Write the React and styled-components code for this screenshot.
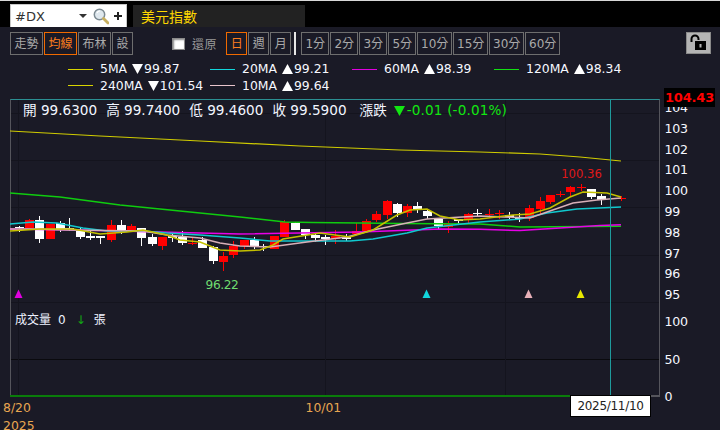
import React from 'react';
import styled, { createGlobalStyle } from 'styled-components';

const FONT = '"DejaVu Sans", "Noto Sans CJK TC", sans-serif';
const CJK = '"Noto Sans CJK TC", "DejaVu Sans", sans-serif';

const Global = createGlobalStyle`
  html, body { margin: 0; padding: 0; background: #1a1a26; }
  body { width: 720px; height: 430px; overflow: hidden; font-family: ${FONT}; }
`;

const Page = styled.div`
  width: 720px; height: 430px; display: flex; flex-direction: column;
  background: #1a1a26; overflow: hidden;
`;
const Header = styled.header`
  height: 27px; flex: none; background: #000; border-top: 1px solid #d8d8d8;
  box-sizing: border-box; display: flex; align-items: flex-end; padding-left: 10px; gap: 6px;
`;
const SearchBox = styled.div`
  width: 117px; height: 23px; box-sizing: border-box; background: #fff;
  border: 1px solid #c8c8c8; border-bottom: none; display: flex; align-items: center;
  padding: 0 3px 0 4px; font: 13px "DejaVu Sans", sans-serif; color: #333;
`;
const SearchText = styled.span`flex: 1;`;
const Caret = styled.span`
  width: 0; height: 0; border-left: 4px solid transparent; border-right: 4px solid transparent;
  border-top: 4px solid #333; margin-right: 6px;
`;
const Title = styled.div`
  width: 172px; height: 22px; background: #222; color: #ffd800; font: 14px/22px ${CJK};
  padding-left: 8px; box-sizing: border-box; letter-spacing: 0;
`;
const Toolbar = styled.nav`
  height: 23px; flex: none; margin-top: 5px; padding-left: 10px; display: flex; align-items: stretch;
`;
const Group = styled.div`
  display: flex; gap: ${p => p.$gap ?? 1}px; margin-left: ${p => p.$ml ?? 0}px;
`;
const Btn = styled.button`
  width: ${p => p.$w}px; height: 23px; padding: 0; box-sizing: border-box; background: transparent;
  border: 1px solid ${p => (p.$on ? '#f06a00' : '#6e6e6e')};
  color: ${p => (p.$on ? '#ff7f1e' : '#aaaaaa')}; font: 12px/20px ${FONT};
`;
const Restore = styled.label`
  display: flex; align-items: center; margin-left: 39px; color: #999; font: 12px ${CJK}; letter-spacing: 0.6px;
`;
const Check = styled.span`
  width: 13px; height: 12px; background: #fff; border: 1px solid #8a8a8a; box-sizing: border-box;
  margin-right: 7px; box-shadow: inset 1px 1px 2px #888;
`;
const Sep = styled.span`width: 2px; height: 23px; background: #e6e6e6; margin: 0 5px 0 3px;`;
const Lock = styled.button`
  width: 25px; height: 22px; padding: 0; margin-left: auto; margin-right: 9px; background: #b4b4b4;
  border: 1px solid #8a8a8a; display: flex; align-items: center; justify-content: center;
`;
const Legend = styled.div`
  margin: 6px 0 0 68px; display: grid; grid-template-columns: repeat(4, 142px); grid-auto-rows: 16.5px;
  color: #f6f8ff; font: 12.4px/16.5px ${FONT};
`;
const LegendItem = styled.div`display: flex; align-items: center;`;
const Swatch = styled.i`
  width: 25px; height: 1px; background: ${p => p.$c}; margin-right: 7px; flex: none;
`;
const Tri = styled.svg`display: block; flex: none; margin: ${p => p.$m};`;
const ChartRow = styled.section`
  position: relative; margin-top: 5px; flex: 1; display: flex; padding-left: 10px; min-height: 0;
`;
const Plot = styled.div`
  position: relative; width: 650px; height: 298px; box-sizing: border-box; flex: none;
  border-top: 1px solid #2b8f92; border-left: 1px solid #55555c; border-right: 1px solid #55555c;
`;
const PlotSvg = styled.svg`position: absolute; left: -1px; top: -1px; display: block;`;
const Quote = styled.div`
  position: absolute; left: 12px; top: 1px; display: flex; gap: 9px; color: #f2f6ff; font: 13.6px/19px ${FONT}; white-space: nowrap;
`;
const ChangeRow = styled.span`display: flex; align-items: center; margin-left: 4px;`;
const Change = styled.span`color: #12e612; letter-spacing: 0.15px;`;
const Volume = styled.div`
  position: absolute; left: 4px; top: 211px; color: #eef2ff; font: 12px/18px ${FONT}; display: flex; gap: 7px; white-space: nowrap;
`;
const VolArrow = styled.span`color: #13a613; margin: 0 1px 0 3px;`;
const Axis = styled.div`
  flex: none; width: 60px; height: 298px; position: relative;
  color: #f6f8ff; font: 12.6px/14px ${FONT}; letter-spacing: -0.35px; padding-left: 4.6px; box-sizing: border-box;
`;
const Prices = styled.div`display: flex; flex-direction: column; margin-top: 2px;`;
const Tick = styled.span`height: ${p => p.$h}px; line-height: 14px; display: block;`;
const Volumes = styled.div`display: flex; flex-direction: column; margin-top: 13px;`;
const PriceTag = styled.div`
  position: absolute; left: 664px; top: -11px; width: 51px; height: 19px; background: #000; color: #f00;
  font: bold 13px/19px "DejaVu Sans", sans-serif; letter-spacing: -0.2px; text-align: center; white-space: nowrap; overflow: hidden;
`;
const Dates = styled.div`
  position: absolute; left: 3px; top: 299.5px; color: #e8a651; font: 12.4px/18px ${FONT};
  display: flex; gap: 271px;
`;
const DateCol = styled.div`display: flex; flex-direction: column;`;
const CursorDate = styled.div`
  position: absolute; left: 570px; top: 296px; width: 81px; height: 22px; box-sizing: border-box;
  background: #fff; border: 1px solid #000; color: #222; font: 12px/20px ${FONT}; letter-spacing: -0.3px; text-align: center;
`;

const C = (x, red, t, b, wt, wb) => ({ x: Math.floor(x), red, t, b, wt, wb });
const candles = [
  C(19,0,227,228,226,232),C(29,1,220,228,219,228),C(39,0,220,239,216,243),C(50,1,224,239,224,239),
  C(60,0,223,229,221,232),C(69.5,0,228,229,218,231),C(80,0,231,237,228,239),C(90,0,236,238,231,240),
  C(100,0,236,238,236,244),C(111,1,225,240,220,242),C(121,0,225,231,220,234),C(131,1,226,230,224,230),
  C(141,0,228,238,228,246),C(152,0,237,244,234,246),C(162,1,237,246,237,250),C(172,0,236,238,234,242),
  C(182,0,237,243,231,245),C(192,1,243,244,237,245),C(202.5,0,240,248,237,248),C(213,0,247,261,246,264),
  C(223,1,256,262,252,271),C(233,1,246,255,241,258),C(244,1,240,246,240,249),C(254,0,240,247,237,249),
  C(263.5,0,246,247,244,251),C(274,1,236,249,236,249),C(284,1,222,237,220,237),C(295,0,223,230,222,230),
  C(305,0,229,235,229,239),C(315,0,235,238,232,242),C(325,0,237,239,235,245),C(335,1,236,239,230,244),
  C(346,0,237,239,234,241),C(356,1,231,234,223,234),C(366,1,221,231,219,231),C(376,1,214,220,211,222),
  C(387,1,201,215,200,219),C(397,0,204,213,203,217),C(407,1,206,213,204,217),C(417,0,206,210,202,213),
  C(427,0,211,216,209,219),C(438,0,219,226,218,229),C(448,1,224,227,221,233),C(458,0,219,221,219,224),
  C(468,1,214,220,213,224),C(477.5,0,213,214,209,217),C(489,1,214,215,209,218),C(499,1,213,214,210,219),
  C(509,0,215,217,212,219),C(519,0,217,219,213,222),C(529,1,208,218,205,221),C(540,1,201,209,197,214),
  C(550,1,195,202,195,204),C(560,1,194,195,191,197),C(570,1,187,192,186,197),C(581,1,187,188,184,191),
  C(591,0,189,197,189,199),C(601,0,196,200,194,205),C(621,1,198,199,196,201),
];

const lines = [
  { c: '#d0cc00', w: 1.2, p: '10,131 100,136 200,141 300,146 400,150 480,152 540,154 580,157 621,161' },
  { c: '#0fcc0f', w: 1.5, p: '10,193 60,197 120,205 180,211 240,217 285,222 312,222.5 360,223 400,223.5 480,224 520,227 621,226.3' },
  { c: '#e800e8', w: 1.5, p: '10,229 77,230 160,232 240,234 360,232 440,229 480,229.3 520,230.5 560,228 600,225.5 621,224.7' },
  { c: '#10c8ce', w: 1.5, p: '10,224 33,222 57,223 83,228 107,231 143,231 167,233 200,235 240,238 270,241 350,241 373,239 407,233 427,228 480,222 520,219 547,213 577,209 621,207' },
  { c: '#d8b0b8', w: 1.5, p: '10,229 30,229 67,230 143,231 167,235 200,238 220,243 240,246 270,247 307,242 347,237 373,230 407,223 427,219 480,216 530,218 547,212 573,203 597,200 621,198' },
  { c: '#c4c000', w: 1.5, p: '10,231 40,229 73,229 100,234 127,232 143,230 167,235 180,240 200,242 220,250 240,251 260,250 273,245 283,239 320,233 350,237 373,230 397,215 410,210 427,209 440,216 460,220 480,219 513,215 530,214 550,208 570,197 583,192 607,193 621,197' },
];

const Mark = ({ x, c }) => <polygon points={`${x},289.5 ${x + 4},298 ${x - 4},298`} fill={c} />;

const PriceChart = () => (
  <PlotSvg width="652" height="300" viewBox="10 99 652 300">
    {[113, 160, 207, 255, 302, 359].map(y => (
      <line key={y} x1="11" x2="659" y1={y + 0.5} y2={y + 0.5} stroke={y === 359 ? '#0a0a0e' : '#14141e'} />
    ))}
    {[18, 325, 505].map(x => (
      <line key={x} x1={x + 0.5} x2={x + 0.5} y1="100" y2="396" stroke="#14141e" />
    ))}
    {candles.map(k => {
      const col = k.red ? '#f00' : '#fff';
      return (
        <g key={k.x} fill={col} shapeRendering="crispEdges">
          <rect x={k.x} y={k.wt} width="1" height={k.wb - k.wt} />
          <rect x={k.x - 4} y={k.t} width="9" height={Math.max(1, k.b - k.t)} />
        </g>
      );
    })}
    {lines.map(l => (
      <polyline key={l.c} points={l.p} fill="none" stroke={l.c} strokeWidth={l.w} />
    ))}
    <line x1="10" x2="570" y1="396" y2="396" stroke="#0a7d0a" strokeWidth="2" />
    <line x1="570" x2="659" y1="396" y2="396" stroke="#55555c" strokeWidth="2" />
    <line x1="610.5" x2="610.5" y1="100" y2="396" stroke="#1f9a9c" />
    <Mark x={18.5} c="#e000e0" />
    <Mark x={426.5} c="#12d6dc" />
    <Mark x={528.5} c="#e8b0b8" />
    <Mark x={580.5} c="#e8e800" />
    <text x="222" y="289" fill="#6fdc6f" fontSize="12.2" letterSpacing="-0.4" fontFamily="DejaVu Sans" textAnchor="middle">96.22</text>
    <text x="581.5" y="178" fill="#e01818" fontSize="11.6" fontFamily="DejaVu Sans" textAnchor="middle">100.36</text>
  </PlotSvg>
);

const Magnifier = () => (
  <svg width="16" height="17" viewBox="0 0 16 17">
    <circle cx="6.5" cy="6.5" r="5.2" fill="#dfe8ee" stroke="#7c8a92" strokeWidth="1.5" />
    <path d="M4 5 A3 3 0 0 1 7 3" stroke="#fff" strokeWidth="1.2" fill="none" />
    <path d="M10.5 10.5 L15 15" stroke="#c8b060" strokeWidth="2.8" strokeLinecap="round" />
  </svg>
);
const PlusIcon = styled.svg`margin-left: 4px; flex: none;`;
const Plus = () => (
  <PlusIcon width="10" height="10" viewBox="0 0 10 10">
    <path d="M5 1V9M1 5H9" stroke="#222" strokeWidth="2" />
  </PlusIcon>
);
const LockIcon = () => (
  <svg width="19" height="18" viewBox="0 0 19 18">
    <path d="M2.5 8V5a3.5 3.5 0 0 1 7 0v1" fill="none" stroke="#000" strokeWidth="2" />
    <rect x="6" y="7" width="11" height="9" fill="#000" />
    <rect x="10.5" y="10" width="2" height="3.5" fill="#b4b4b4" />
  </svg>
);
const Triangle = ({ down, color = '#fff', size = 11, m }) => (
  <Tri $m={m} width={size} height="10" viewBox="0 0 11 10">
    <polygon points={down ? '0,0 11,0 5.5,10' : '5.5,0 11,10 0,10'} fill={color} />
  </Tri>
);

const legend = [
  ['#d8d400', '5MA', 1, '99.87'], ['#12d6dc', '20MA', 0, '99.21'],
  ['#e000e0', '60MA', 0, '98.39'], ['#12e012', '120MA', 0, '98.34'],
  ['#d8d400', '240MA', 1, '101.54'], ['#e8c4cc', '10MA', 0, '99.64'],
];
const prices = [104, 103, 102, 101, 100, 99, 98, 97, 96];

export default function App() {
  return (
    <Page>
      <Global />
      <Header>
        <SearchBox>
          <SearchText>#DX</SearchText>
          <Caret />
          <Magnifier />
          <Plus />
        </SearchBox>
        <Title>美元指數</Title>
      </Header>
      <Toolbar>
        <Group>
          <Btn $w={33}>走勢</Btn>
          <Btn $w={33} $on>均線</Btn>
          <Btn $w={33}>布林</Btn>
          <Btn $w={21}>設</Btn>
        </Group>
        <Restore><Check />還原</Restore>
        <Group $ml={9}>
          <Btn $w={21} $on>日</Btn>
          <Btn $w={21}>週</Btn>
          <Btn $w={21}>月</Btn>
        </Group>
        <Sep />
        <Group>
          {['1分', '2分', '3分', '5分'].map(t => <Btn key={t} $w={28}>{t}</Btn>)}
          {['10分', '15分', '30分', '60分'].map(t => <Btn key={t} $w={35}>{t}</Btn>)}
        </Group>
        <Lock aria-label="lock"><LockIcon /></Lock>
      </Toolbar>
      <Legend>
        {legend.map(([c, n, d, v]) => (
          <LegendItem key={n}>
            <Swatch $c={c} />{n}<Triangle down={d} m="0 1px 0 5px" />{v}
          </LegendItem>
        ))}
      </Legend>
      <ChartRow>
        <Plot>
          <PriceChart />
          <Quote>
            <span>開 99.6300</span><span>高 99.7400</span><span>低 99.4600</span><span>收 99.5900</span>
            <ChangeRow>
              漲跌<Triangle down color="#12e612" m="0 2px 0 7px" /><Change>-0.01 (-0.01%)</Change>
            </ChangeRow>
          </Quote>
          <Volume>成交量 <span>0</span><VolArrow>↓</VolArrow><span>張</span></Volume>
        </Plot>
        <Axis>
          <Prices>
            {prices.map(p => <Tick key={p} $h={20.8}>{p}</Tick>)}
            <Tick $h={14}>95</Tick>
          </Prices>
          <Volumes>
            <Tick $h={38}>100</Tick>
            <Tick $h={37}>50</Tick>
            <Tick $h={14}>0</Tick>
          </Volumes>
        </Axis>
        <PriceTag>104.43</PriceTag>
        <Dates>
          <DateCol><span>8/20</span><span>2025</span></DateCol>
          <span>10/01</span>
        </Dates>
        <CursorDate>2025/11/10</CursorDate>
      </ChartRow>
    </Page>
  );
}
